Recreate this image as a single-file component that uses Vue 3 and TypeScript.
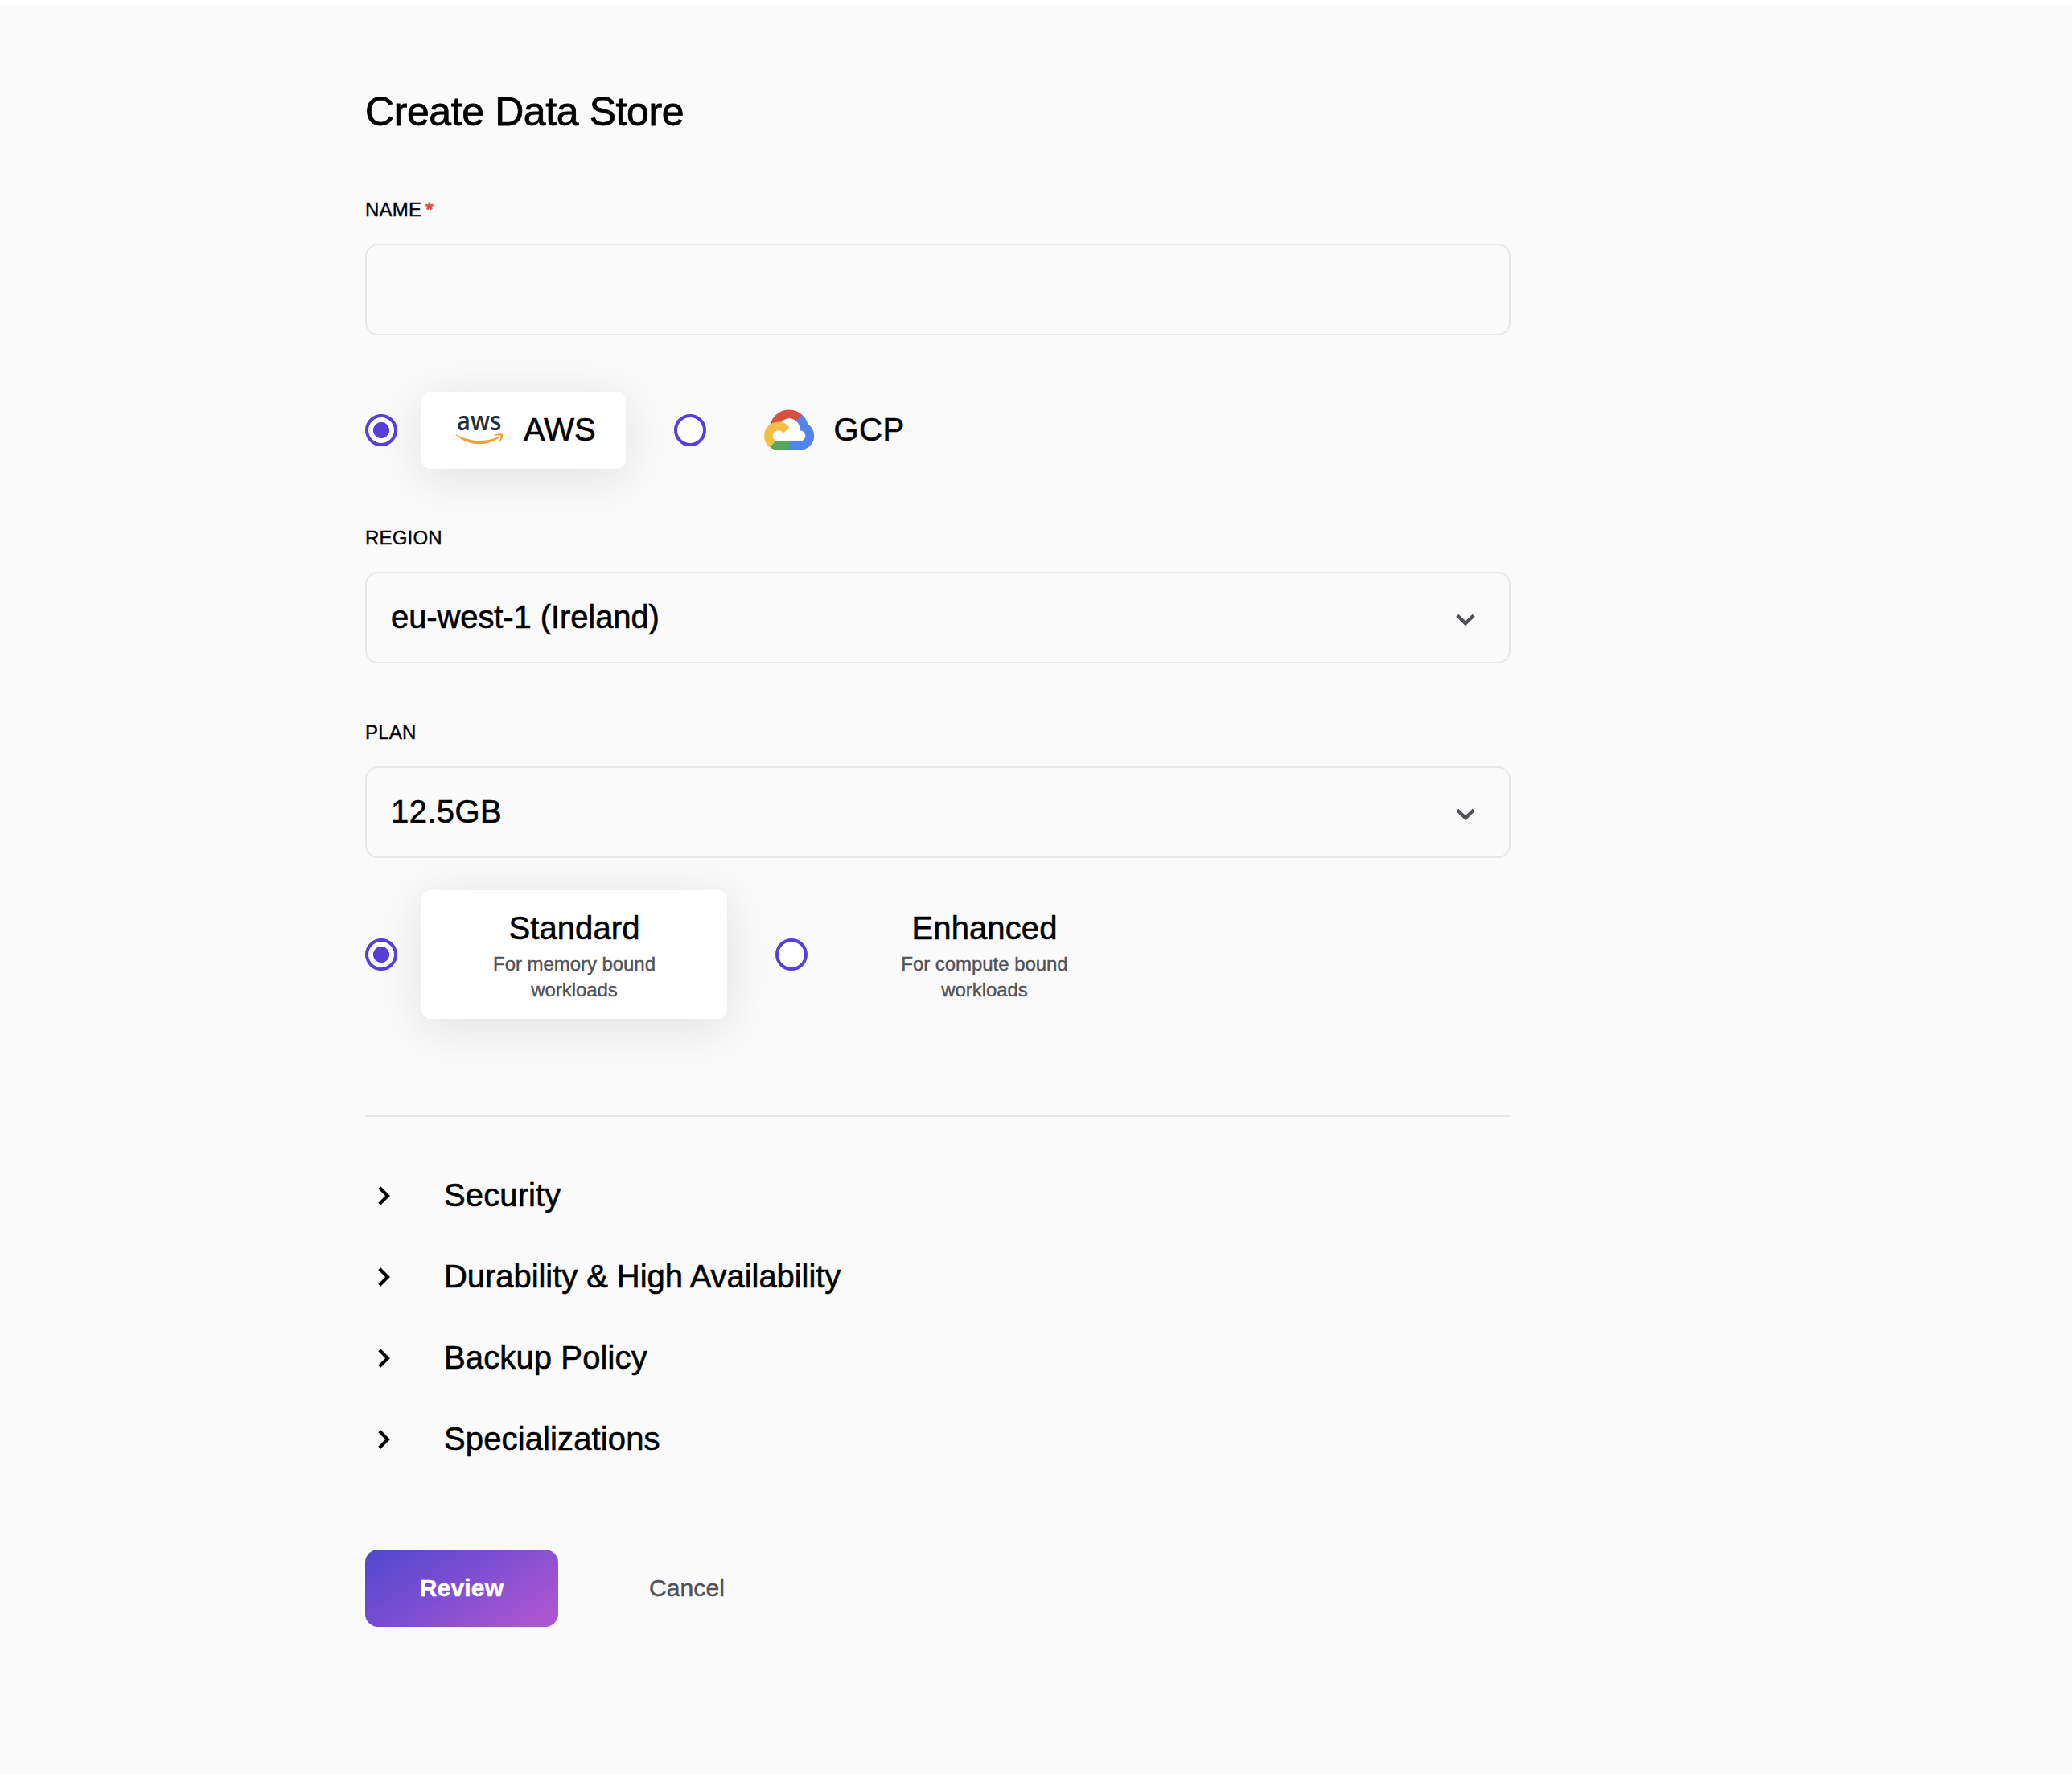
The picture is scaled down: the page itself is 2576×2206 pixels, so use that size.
<script setup lang="ts">
import { ref } from 'vue'

type Provider = 'aws' | 'gcp'

interface PlanType {
  id: string
  title: string
  lines: string[]
}

const name = ref('')
const provider = ref<Provider>('aws')
const planType = ref('standard')

const planTypes: PlanType[] = [
  { id: 'standard', title: 'Standard', lines: ['For memory bound', 'workloads'] },
  { id: 'enhanced', title: 'Enhanced', lines: ['For compute bound', 'workloads'] },
]

const sections = [
  { title: 'Security', cls: 'loose' },
  { title: 'Durability & High Availability', cls: 'tight' },
  { title: 'Backup Policy', cls: 'loose' },
  { title: 'Specializations', cls: 'loose' },
]
</script>

<template>
  <div class="page">
    <main class="form">
      <h1 class="title">Create Data Store</h1>

      <label class="label" for="store-name">NAME<span class="required">*</span></label>
      <input id="store-name" v-model="name" class="field" type="text" />

      <div class="options providers">
        <div class="option" @click="provider = 'aws'">
          <span class="radio" :class="{ on: provider === 'aws' }"></span>
          <div class="card provider" :class="{ selected: provider === 'aws' }">
            <svg class="logo" viewBox="0 0 64 60">
              <text class="aws-word" x="3.8" y="30.2" textLength="55.5" lengthAdjust="spacingAndGlyphs">aws</text>
              <g transform="translate(2.6 12.2) scale(0.194)" fill="#f29f37">
                <path d="M273.5,143.7c-32.9,24.3-80.7,37.2-121.8,37.2c-57.6,0-109.5-21.3-148.7-56.7c-3.1-2.8-0.3-6.6,3.4-4.4c42.4,24.6,94.7,39.5,148.8,39.5c36.5,0,76.6-7.6,113.5-23.2C274.2,133.6,278.9,139.7,273.5,143.7z" />
                <path d="M287.2,128.1c-4.2-5.4-27.8-2.6-38.5-1.3c-3.2,0.4-3.7-2.4-0.8-4.5c18.8-13.2,49.7-9.4,53.3-5c3.6,4.5-1,35.4-18.6,50.2c-2.7,2.3-5.3,1.1-4.1-1.9C282.5,155.7,291.4,133.4,287.2,128.1z" />
              </g>
            </svg>
            <span class="provider-name aws-name">AWS</span>
          </div>
        </div>
        <div class="option" @click="provider = 'gcp'">
          <span class="radio" :class="{ on: provider === 'gcp' }"></span>
          <div class="card provider" :class="{ selected: provider === 'gcp' }">
            <svg class="logo" viewBox="0 0 64 52">
              <g transform="translate(2.1 0.6) scale(0.2425)">
                <path fill="#fff" d="M50 133 L86 63 L130 45 L165 56 L190 106 L215 134 L190 165 L68 165 Z" />
                <path fill="#d8503f" d="M170.25,56.82L192.5,34.57L193.99,25.2C153.44,-11.68 88.98,-7.5 52.42,33.92C42.27,45.42 34.73,59.76 30.72,74.57L38.69,73.45L83.19,66.11L86.63,62.6C106.42,40.85 139.9,37.93 162.76,56.43Z" />
                <path fill="#5383ec" d="M224.2,73.92C219.09,55.08 208.59,38.15 193.99,25.2L162.76,56.43C175.94,67.2 183.46,83.44 183.13,100.47V106.01C198.49,106.01 210.93,118.45 210.93,133.81C210.93,149.16 198.49,161.29 183.13,161.29H127.46V205.8H183.13C223.06,206.11 255.69,174.3 256,134.37C256.19,110.17 244.25,87.48 224.2,73.92Z" />
                <path fill="#58a55c" d="M71.87,205.8H127.46V161.29H71.87C67.91,161.29 64.07,160.44 60.47,158.79L28.22,191.04C40.79,200.53 56.12,205.86 71.87,205.8Z" />
                <path fill="#f1bf42" d="M71.87,61.43C31.94,61.66 -0.24,94.23 0,134.16C0.13,156.46 10.55,177.45 28.22,191.04L60.47,158.79C46.48,152.47 40.26,136.01 46.58,122.02C52.9,108.03 69.37,101.81 83.36,108.13C89.52,110.91 94.46,115.85 97.25,122.02L129.49,89.77C115.77,71.83 94.45,61.34 71.87,61.43Z" />
              </g>
            </svg>
            <span class="provider-name gcp-name">GCP</span>
          </div>
        </div>
      </div>

      <span class="label">REGION</span>
      <div class="field select">
        <span class="value">eu-west-1 (Ireland)</span>
        <svg class="caret" viewBox="0 0 24 16"><path d="M1.8 2.2 L12 12.2 L22.2 2.2" /></svg>
      </div>

      <span class="label plan-label">PLAN</span>
      <div class="field select">
        <span class="value size">12.5GB</span>
        <svg class="caret" viewBox="0 0 24 16"><path d="M1.8 2.2 L12 12.2 L22.2 2.2" /></svg>
      </div>

      <div class="options plans">
        <div v-for="p in planTypes" :key="p.id" class="option" @click="planType = p.id">
          <span class="radio" :class="{ on: planType === p.id }"></span>
          <div class="card plan" :class="{ selected: planType === p.id }">
            <span class="plan-title">{{ p.title }}</span>
            <span v-for="l in p.lines" :key="l" class="plan-line">{{ l }}</span>
          </div>
        </div>
      </div>

      <hr class="divider" />

      <div v-for="s in sections" :key="s.title" class="section">
        <svg class="arrow" viewBox="0 0 16 24"><path d="M1.8 1.8 L12 12 L1.8 22.2" /></svg>
        <span class="section-title" :class="s.cls">{{ s.title }}</span>
      </div>

      <div class="actions">
        <button class="review" type="button">Review</button>
        <button class="cancel" type="button">Cancel</button>
      </div>
    </main>
  </div>
</template>

<style>
body {
  margin: 0;
  background: #fafafa;
}
</style>

<style scoped>
.page {
  box-sizing: border-box;
  width: 2576px;
  height: 2206px;
  overflow: hidden;
  border-top: 6px solid #fff;
  background: #fafafa;
  color: #000;
  font-family: "Liberation Sans", Arial, sans-serif;
  -webkit-text-stroke: 0.6px currentColor;
}
.form {
  display: flex;
  flex-direction: column;
  width: 1424px;
  padding: 102px 0 0 454px;
}
.title {
  margin: 0;
  font-size: 50px;
  font-weight: 400;
  line-height: 62px;
  letter-spacing: -0.4px;
  -webkit-text-stroke-width: 0.8px;
}
.label {
  display: flex;
  margin: 75px 0 24px;
  height: 34px;
  font-size: 24px;
  line-height: 32px;
  letter-spacing: 0.2px;
  -webkit-text-stroke-width: 0.4px;
}
.required {
  margin-left: 5px;
  color: #d9503f;
  -webkit-text-stroke-width: 1.1px;
}
.field {
  box-sizing: border-box;
  width: 1424px;
  height: 114px;
  padding: 0 42px 2px 30px;
  border: 2px solid #e8e8e8;
  border-radius: 16px;
  background: #fafafa;
  font: 40px "Liberation Sans", Arial, sans-serif;
  outline: none;
}
.select {
  display: flex;
  align-items: center;
  justify-content: space-between;
}
.value {
  letter-spacing: -0.1px;
}
.value.size {
  letter-spacing: 0.4px;
}
.caret {
  width: 24px;
  height: 16px;
  margin-top: 8px;
}
.caret path {
  fill: none;
  stroke: #515157;
  stroke-width: 4.4;
}
.options {
  display: flex;
  gap: 60px;
}
.providers {
  margin-top: 70px;
}
.option {
  display: flex;
  align-items: center;
  gap: 30px;
}
.radio {
  box-sizing: border-box;
  width: 40px;
  height: 40px;
  border: 4px solid #573fd9;
  border-radius: 50%;
  background: #fff;
  z-index: 1;
}
.radio.on {
  background: radial-gradient(circle, #573fd9 9.7px, #fff 10.3px);
}
.card {
  box-sizing: border-box;
  display: flex;
  border-radius: 12px;
}
.card.selected {
  background: #fff;
  box-shadow: 0 10px 60px rgba(8, 28, 20, 0.11);
}
.provider {
  width: 254px;
  height: 96px;
  padding-left: 40px;
  align-items: center;
}
.logo {
  width: 64px;
  flex: none;
  overflow: visible;
}
.aws-word {
  font-family: "Open Sans", "Noto Sans", sans-serif;
  font-size: 32px;
  font-weight: 600;
  fill: #252f3e;
  stroke: none;
  -webkit-text-stroke: 0;
}
.provider-name {
  padding-bottom: 2px;
  font-size: 40px;
  line-height: 48px;
}
.aws-name {
  margin-left: 23px;
}
.gcp-name {
  margin-left: 24.5px;
  letter-spacing: 0.5px;
}
.providers + .label {
  margin-top: 70px;
}
.plan-label {
  margin-top: 70px;
}
.plans {
  margin-top: 40px;
}
.plan {
  flex-direction: column;
  align-items: center;
  width: 380px;
  height: 160px;
  padding-top: 23px;
}
.plan-title {
  font-size: 40px;
  line-height: 48px;
  letter-spacing: 0.1px;
}
.plan-line {
  color: #515157;
  font-size: 24px;
  line-height: 32px;
  letter-spacing: -0.05px;
  -webkit-text-stroke-width: 0.4px;
}
.plan-line:nth-child(2) {
  margin-top: 5px;
}
.divider {
  width: 1424px;
  height: 2px;
  margin: 120px 0 47px;
  border: 0;
  background: #e8e8e8;
}
.section {
  display: flex;
  align-items: center;
  height: 101px;
}
.arrow {
  width: 16px;
  height: 24px;
  margin: 0 66px 0 16px;
}
.arrow path {
  fill: none;
  stroke: #000;
  stroke-width: 4.2;
}
.section-title {
  padding-bottom: 2px;
  font-size: 40px;
  line-height: 48px;
}
.loose {
  letter-spacing: 0.12px;
}
.tight {
  letter-spacing: -0.06px;
}
.actions {
  display: flex;
  margin-top: 87px;
}
button {
  height: 96px;
  padding: 0;
  border: 0;
  border-radius: 16px;
  background: none;
  font: 30px "Liberation Sans", Arial, sans-serif;
}
.review {
  width: 240px;
  background: linear-gradient(146deg, #4f47d1, #a855d0 88%);
  color: #fff;
  font-weight: 700;
  letter-spacing: 0.2px;
  -webkit-text-stroke: 0.5px currentColor;
}
.cancel {
  width: 320px;
  color: #515157;
  letter-spacing: 0.1px;
  -webkit-text-stroke: 0.5px currentColor;
}
</style>
